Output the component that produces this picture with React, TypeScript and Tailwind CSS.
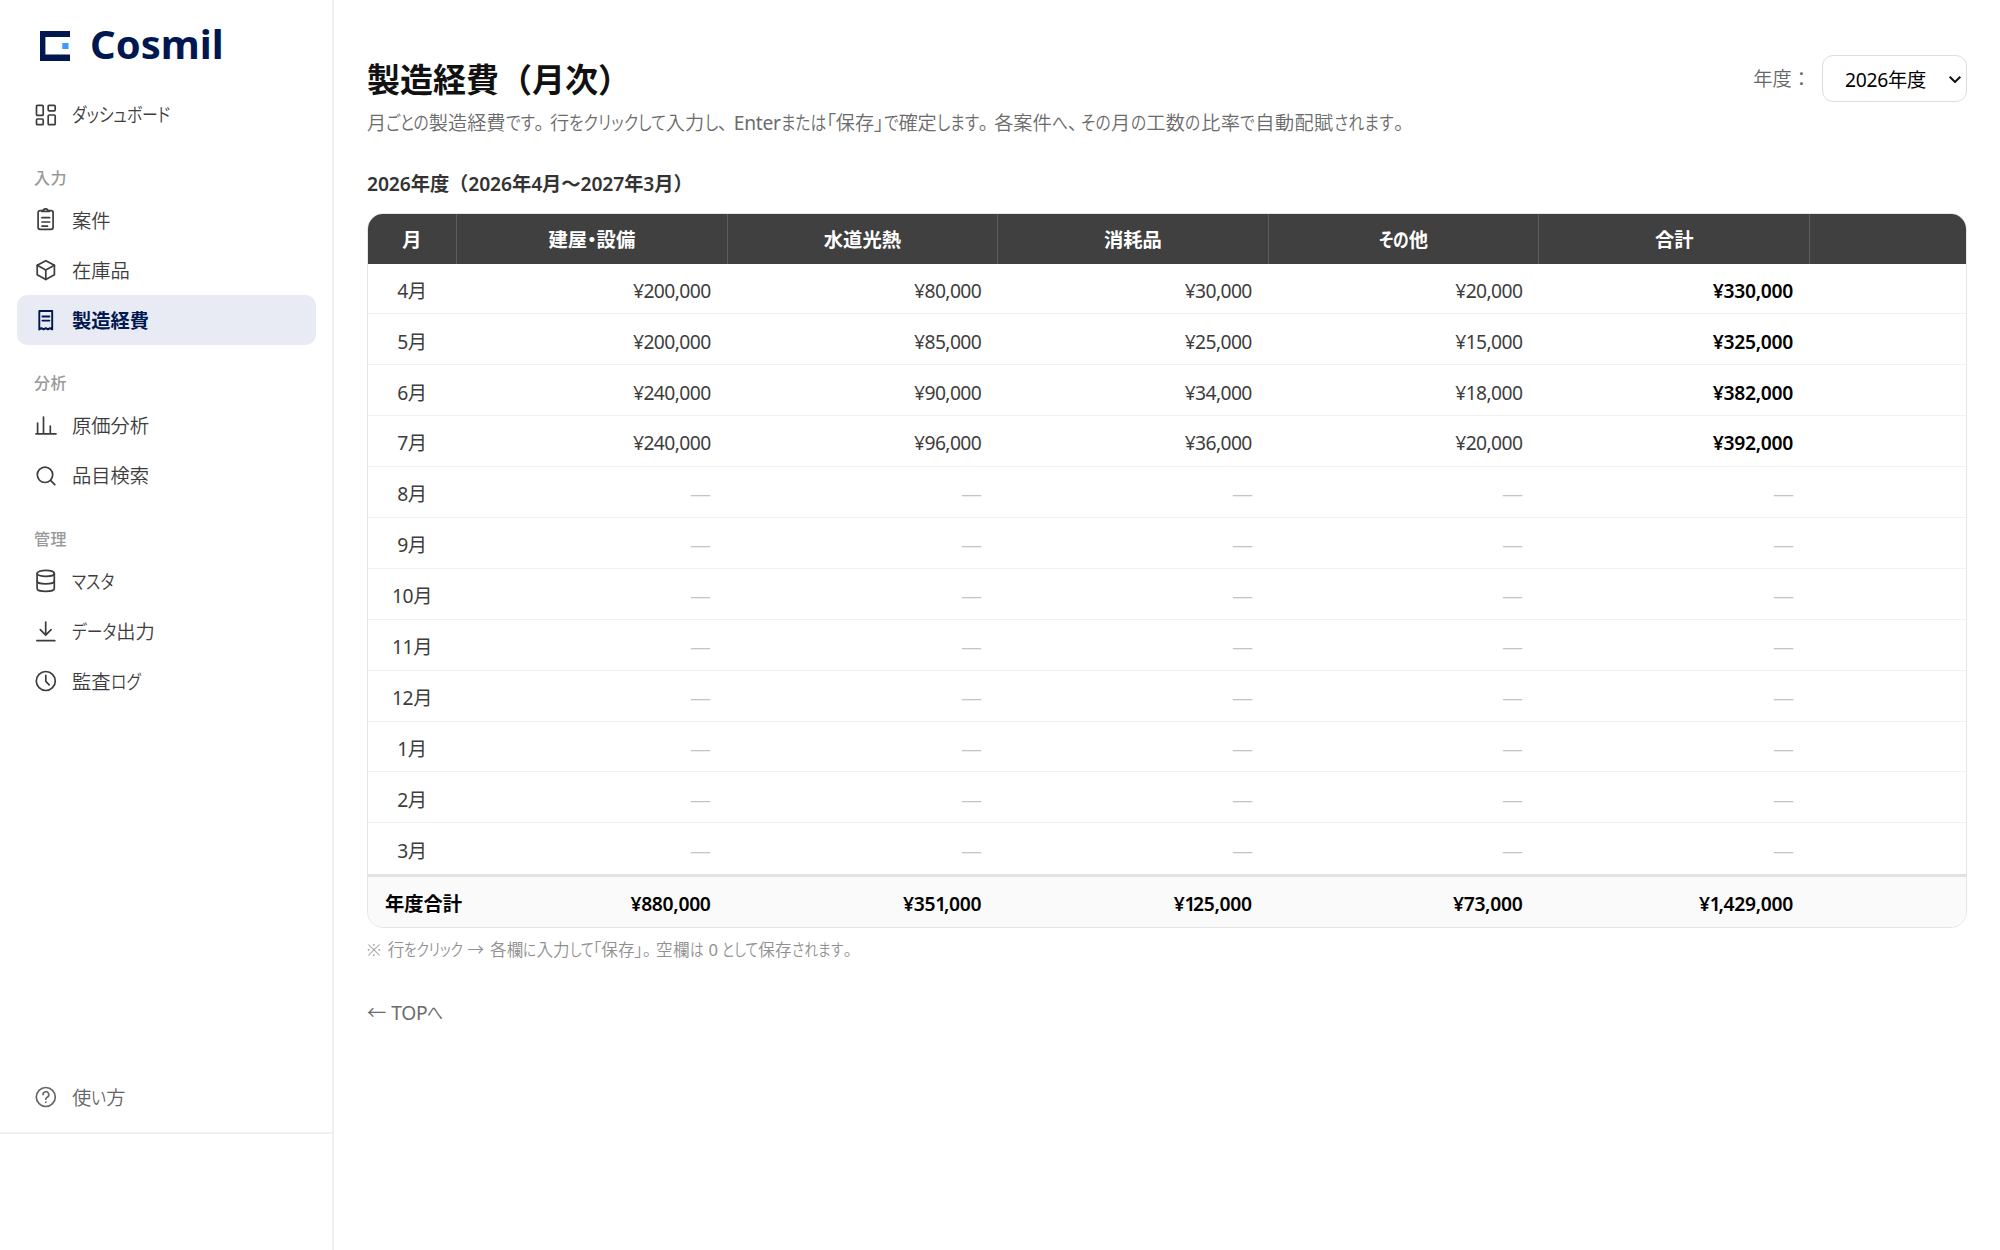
import { useState } from 'react'
import type { ReactNode } from 'react'

const MONTHS = [
  { label: '4月', values: [200000, 80000, 30000, 20000] },
  { label: '5月', values: [200000, 85000, 25000, 15000] },
  { label: '6月', values: [240000, 90000, 34000, 18000] },
  { label: '7月', values: [240000, 96000, 36000, 20000] },
  { label: '8月', values: [] },
  { label: '9月', values: [] },
  { label: '10月', values: [] },
  { label: '11月', values: [] },
  { label: '12月', values: [] },
  { label: '1月', values: [] },
  { label: '2月', values: [] },
  { label: '3月', values: [] },
]

const COLUMNS = ['建屋・設備', '水道光熱', '消耗品', 'その他']

const ICONS: Record<string, ReactNode> = {
  dashboard: (
    <>
      <rect x="2.5" y="2.3" width="6.7" height="10.1" rx="1" />
      <rect x="14.2" y="2.3" width="7" height="5.5" rx="1" />
      <rect x="2.5" y="16" width="6.7" height="5.7" rx="1" />
      <rect x="14.2" y="12" width="7" height="9.7" rx="1" />
    </>
  ),
  clipboard: (
    <>
      <path d="M8 2.6H6.1a2 2 0 0 0-2 2v14.7a2 2 0 0 0 2 2h11a2 2 0 0 0 2-2V4.6a2 2 0 0 0-2-2h-1.9" />
      <path d="M8 3.4V2.6h1.2a2.5 2.5 0 0 1 4.8 0h1.2v.8z" />
      <path d="M8 9.7h7.6M8 14h7.6M8 18.2h5.4" />
    </>
  ),
  box: (
    <>
      <path d="M11.8 2.7 20.4 7.3v9.5l-8.6 4.6-8.6-4.6V7.3z" />
      <path d="M3.2 7.3l8.6 4.6 8.6-4.6M11.8 11.9v9.5" />
    </>
  ),
  receipt: (
    <>
      <path d="M5.3 21.4V3h12.9v18.4l-2.2-1.3-2.1 1.3-2.1-1.3-2.2 1.3-2.1-1.3z" />
      <path d="M8.4 8.5h7M8.4 12.6h7" />
    </>
  ),
  chart: <path d="M2 19.8h20M3.6 19.4V9M9.5 19.4V3M16.3 19.4v-7.2" />,
  search: (
    <>
      <circle cx="11" cy="10.8" r="7.7" />
      <path d="m16.6 16.4 4.2 4.2" />
    </>
  ),
  database: (
    <>
      <ellipse cx="11.7" cy="4.4" rx="8.6" ry="3" />
      <path d="M3.1 4.4v15c0 1.7 3.8 3 8.6 3s8.6-1.3 8.6-3v-15" />
      <path d="M3.1 11.9c0 1.7 3.8 3 8.6 3s8.6-1.3 8.6-3" />
    </>
  ),
  download: <path d="M11.7 3v13M6.3 10.7l5.4 5.4 5.4-5.4M2.9 21.7h17.9" />,
  clock: (
    <>
      <circle cx="11.8" cy="12" r="9.5" />
      <path d="M11.8 6.3v6l3.4 3.5" />
    </>
  ),
  help: (
    <>
      <circle cx="11.8" cy="12" r="9.5" />
      <path d="M9 9.6a2.9 2.9 0 1 1 4.2 2.6c-.9.5-1.4 1-1.4 2" />
      <path d="M11.8 17.1v.2" />
    </>
  ),
}

const GROUPS = [
  { title: '', items: [{ icon: 'dashboard', label: 'ダッシュボード' }] },
  {
    title: '入力',
    items: [
      { icon: 'clipboard', label: '案件' },
      { icon: 'box', label: '在庫品' },
      { icon: 'receipt', label: '製造経費', active: true },
    ],
  },
  {
    title: '分析',
    items: [
      { icon: 'chart', label: '原価分析' },
      { icon: 'search', label: '品目検索' },
    ],
  },
  {
    title: '管理',
    items: [
      { icon: 'database', label: 'マスタ' },
      { icon: 'download', label: 'データ出力' },
      { icon: 'clock', label: '監査ログ' },
    ],
  },
]

const yen = (n: number) => `¥${n.toLocaleString('en-US')}`
const sum = (list: number[]) => list.reduce((a, b) => a + b, 0)

// Sets kana runs narrower than the kanji around them
function Condensed({ text }: { text: string }) {
  return (
    <span className="whitespace-pre [font-feature-settings:'palt']">
      {text.split(/([ぁ-んァ-ヶー]+|[A-Za-z0-9]+)/).filter(Boolean).map((part, i) => {
        if (/[A-Za-z0-9]/.test(part)) return <span key={i} className="font-normal tracking-[-0.3px]">{part}</span>
        if (!/[ぁ-んァ-ヶー]/.test(part)) return part
        return (
          <span key={i} className="inline-block origin-left scale-x-[.82]" style={{ marginRight: `${-0.165 * part.length}em` }}>{part}</span>
        )
      })}
    </span>
  )
}

function NavItem({ icon, label, active, muted }: { icon: string; label: string; active?: boolean; muted?: boolean }) {
  const tone = active ? 'bg-[#e8ebf4] text-[#00174f] font-bold' : muted ? 'text-[#666] font-[350]' : 'text-[#3d3d3d] font-[350]'
  return (
    <a href="#" className={`flex h-[50px] items-center rounded-[10px] pl-[17px] ${tone}`}>
      <svg viewBox="0 0 24 24" className="size-6 shrink-0" fill="none" stroke="currentColor" strokeWidth={active ? 1.9 : 1.7} strokeLinecap="round" strokeLinejoin="round">
        {ICONS[icon]}
      </svg>
      <span className="ml-[14px] pt-px text-[19.3px] leading-none"><Condensed text={label} /></span>
    </a>
  )
}

function Sidebar() {
  return (
    <aside className="flex h-full w-[334px] shrink-0 flex-col border-r-2 border-[#efefef]">
      <div className="flex h-[89.5px] shrink-0 items-start pl-10 pt-[30.5px]">
        <svg viewBox="0 0 30 30" className="size-[30px]">
          <path d="M0 0h30v6H5.4v17.6H30V30H0z" fill="#00174f" />
          <rect x="22.3" y="12" width="6.2" height="6" fill="#3d9bff" />
        </svg>
        <span className="-mt-[9px] ml-[20px] text-[40px] font-bold leading-[44px] text-[#00174f]">Cosmil</span>
      </div>

      <nav className="pl-[17px] pr-4">
        {GROUPS.map((g) => (
          <div key={g.title}>
            {g.title && (
              <div className="h-[55.5px] pl-[17px] pt-[30px] text-[16px] font-medium leading-4 tracking-[0.5px] text-[#999]">{g.title}</div>
            )}
            {g.items.map((item) => <NavItem key={item.label} {...item} />)}
          </div>
        ))}
      </nav>

      <div className="mt-auto h-[178px] px-[17px]">
        <NavItem icon="help" label="使い方" muted />
      </div>
      <div className="-mt-[118px] h-[118px] shrink-0 border-t-2 border-[#efefef]" />
    </aside>
  )
}

function Amount({ value, strong }: { value?: number; strong?: boolean }) {
  if (value === undefined) {
    return <span className="-mr-px inline-block origin-right scale-x-[1.25] font-['Noto_Sans_CJK_JP'] font-normal text-[#c4c4c4]">—</span>
  }
  if (!strong) return <span className="tracking-[-0.6px]">{yen(value)}</span>
  return (
    <span className="tracking-[-0.3px]">
      {yen(value).split(/(1)/).map((s, i) => s === '1' ? <span key={i} className="tracking-[-2.4px]">1</span> : s)}
    </span>
  )
}

function ExpenseTable() {
  const totals = COLUMNS.map((_, i) => sum(MONTHS.map((m) => m.values[i] ?? 0)))

  return (
    <div className="mt-[16.5px] w-[1600px] overflow-hidden rounded-[16px] border border-[#e5e5e5]">
      <table className="w-full table-fixed border-separate border-spacing-0 text-[19.3px] leading-none">
        <colgroup>
          <col className="w-[89px]" />
          <col className="w-[270.6px]" />
          <col className="w-[270.6px]" />
          <col className="w-[270.6px]" />
          <col className="w-[270.6px]" />
          <col className="w-[270.6px]" />
          <col />
        </colgroup>
        <thead>
          <tr className="bg-[#404040] text-white">
            {['月', ...COLUMNS, '合計'].map((c) => (
              <th key={c} className="h-[50px] border-r border-[#5c5c5c] p-0 pt-[3px] text-center font-bold"><Condensed text={c} /></th>
            ))}
            <th className="p-0" />
          </tr>
        </thead>
        <tbody className="text-[#3d3d3d]">
          {MONTHS.map((m, row) => (
            <tr key={m.label}>
              <td className={`h-[50.9px] p-0 pr-px pt-[4px] text-center tracking-[-0.5px] ${row < 11 ? 'border-b border-[#f2f2f2]' : ''}`}>{m.label}</td>
              {COLUMNS.map((c, i) => (
                <td key={c} className={`p-0 pr-[17px] pt-[4px] text-right ${row < 11 ? 'border-b border-[#f2f2f2]' : ''}`}>
                  <Amount value={m.values[i]} />
                </td>
              ))}
              <td className={`p-0 pr-[17px] pt-[4px] text-right font-semibold text-black ${row < 11 ? 'border-b border-[#f2f2f2]' : ''}`}>
                <Amount value={m.values.length ? sum(m.values) : undefined} strong />
              </td>
              <td className={row < 11 ? 'border-b border-[#f2f2f2]' : ''} />
            </tr>
          ))}
        </tbody>
        <tfoot>
          <tr className="bg-[#fafafa] font-semibold text-black">
            <td className="h-[52.5px] whitespace-nowrap border-t-[3px] border-[#e2e2e2] p-0 pl-[17px] pt-[4px]">年度合計</td>
            {totals.map((t, i) => (
              <td key={COLUMNS[i]} className="border-t-[3px] border-[#e2e2e2] p-0 pr-[17px] pt-[4px] text-right"><Amount value={t} strong /></td>
            ))}
            <td className="border-t-[3px] border-[#e2e2e2] p-0 pr-[17px] pt-[4px] text-right"><Amount value={sum(totals)} strong /></td>
            <td className="border-t-[3px] border-[#e2e2e2]" />
          </tr>
        </tfoot>
      </table>
    </div>
  )
}

export default function App() {
  const [year, setYear] = useState('2026')

  return (
    <div lang="ja" className="flex h-[1250px] w-[2000px] overflow-hidden bg-white font-['Noto_Sans','Noto_Sans_CJK_JP',sans-serif]">
      <Sidebar />
      <main className="flex-1 pl-[33px] pt-[55px]">
        <div className="flex w-[1600px] items-start justify-between">
          <div>
            <h1 className="mt-[7px] text-[33px] font-semibold leading-[36px] text-[#111]">製造経費（月次）</h1>
            <p className="mt-[13px] flex text-[19.2px] font-[350] leading-6 text-[#6b6b6b]">
              <span className="mr-[6px]"><Condensed text="月ごとの製造経費です。" /></span>
              <span className="mr-[6px] tracking-[0.3px]"><Condensed text="行をクリックして入力し、" /></span>
              <span className="mr-[6px]"><Condensed text="Enterまたは「保存」で確定します。" /></span>
              <span className="mr-[3px]"><Condensed text="各案件へ、" /></span>
              <span className="tracking-[0.4px]"><Condensed text="その月の工数の比率で自動配賦されます。" /></span>
            </p>
          </div>
          <label className="flex items-center text-[19.3px] text-[#666]">
            <span className="mr-[11px] pt-[2px] font-[350]">年度：</span>
            <span className="relative">
              <select value={year} onChange={(e) => setYear(e.target.value)} className="h-[47px] w-[145px] appearance-none rounded-[11px] border-[1.5px] border-[#ddd] bg-white pl-[22px] pt-[3px] tracking-[-0.3px] text-black">
                <option value="2026">2026年度</option>
              </select>
              <svg viewBox="0 0 12 7" className="pointer-events-none absolute right-[6px] top-[21px] h-[7px] w-3" fill="none" stroke="#111" strokeWidth="2">
                <path d="M.7.8 6 6 11.3.8" />
              </svg>
            </span>
          </label>
        </div>

        <h2 className="mt-[37px] text-[19.3px] font-semibold leading-6 tracking-[-0.1px] text-[#333]">2026年度（2026年4月～2027年3月）</h2>
        <ExpenseTable />
        <p className="mt-[10.5px] flex text-[16.6px] font-[350] leading-6 text-[#909090]">
          <span className="mr-[7px]">※</span>
          <Condensed text="行をクリック" />
          <span className="ml-[5px] mr-[6px]">→</span>
          <span className="mr-[5px]"><Condensed text="各欄に入力して「保存」。" /></span>
          <span className="tracking-[0.25px]"><Condensed text="空欄は 0 として保存されます。" /></span>
        </p>
        <a href="#" className="mt-[39px] block text-[19.3px] font-[350] leading-6 text-[#6b6b6b]"><Condensed text="← TOPへ" /></a>
      </main>
    </div>
  )
}
